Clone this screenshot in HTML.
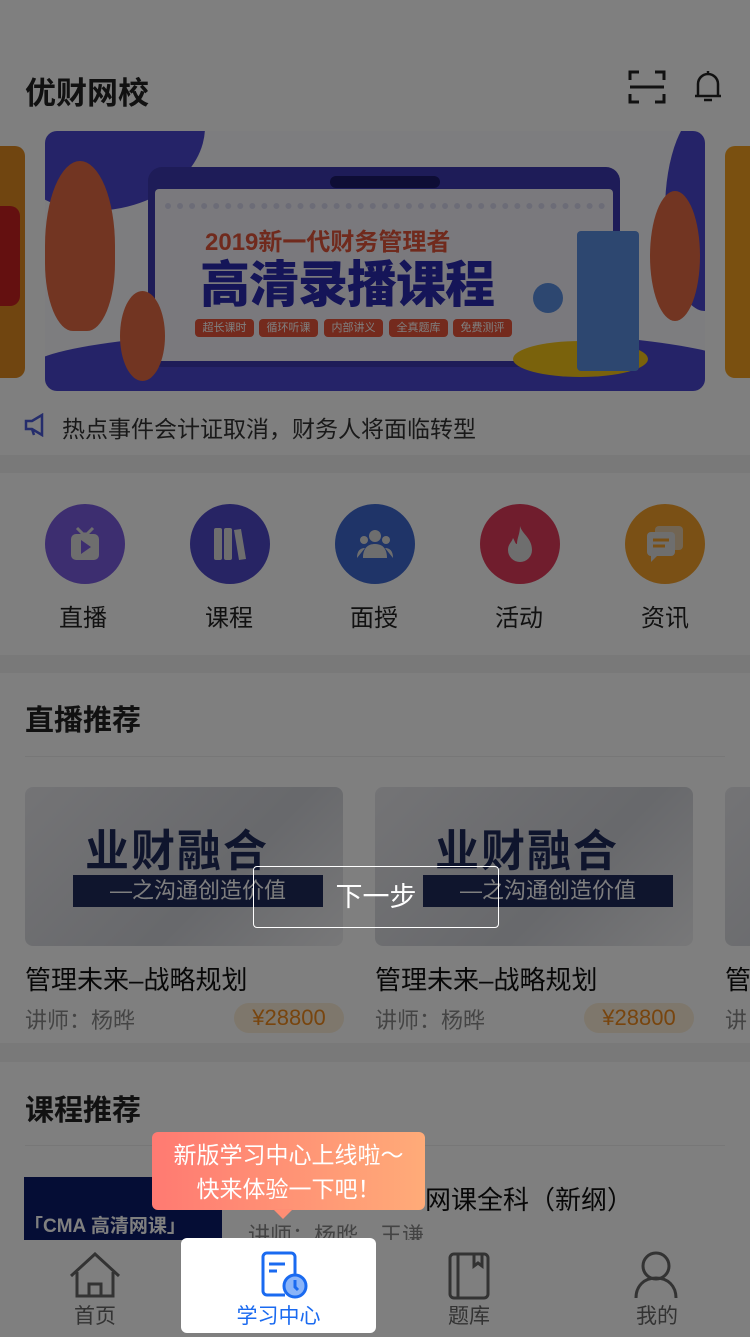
<!DOCTYPE html>
<html><head><meta charset="utf-8"><style>
*{margin:0;padding:0;box-sizing:border-box}
body{width:750px;height:1337px;overflow:hidden;background:#fff;font-family:"Liberation Sans","Noto Sans CJK SC",sans-serif;color:#222;position:relative}
.abs{position:absolute}
.band{position:absolute;left:0;width:750px;background:#f2f2f2}
.ic{position:absolute;top:504px;width:80px;height:80px;border-radius:50%}
.ic svg{position:absolute;left:20px;top:20px}
.lab{position:absolute;top:598px;width:120px;text-align:center;font-size:24px;color:#222}
.card{position:absolute;top:787px;width:318px;height:159px;border-radius:8px;background:linear-gradient(135deg,#e8e8ec,#d0d2d8 60%,#f0f0f2);overflow:hidden}
.card .t1{position:absolute;left:60px;top:28px;font-size:44px;font-weight:bold;color:#1e2a5a;letter-spacing:2px}
.card .t2{position:absolute;left:48px;top:88px;width:250px;height:32px;background:#1e2a5a;color:#fff;font-size:22px;line-height:32px;text-align:center}
.ct{position:absolute;top:960px;font-size:26px;color:#111}
.cl{position:absolute;top:1003px;font-size:22px;color:#888}
.pr{position:absolute;top:1003px;width:110px;height:30px;border-radius:15px;background:#fdeed8;color:#f08a1c;font-size:22px;text-align:center;line-height:30px}
.tab{position:absolute;top:1300px;width:120px;text-align:center;font-size:21px;color:#666}
#ov{position:absolute;left:0;top:0;width:750px;height:1337px;background:rgba(0,0,0,.5)}
.tg{position:absolute;top:188px;width:59px;height:18px;border-radius:4px;background:#e8553a;color:#fff;font-size:11px;line-height:18px;text-align:center}
</style></head><body>
<div class="abs" style="left:25px;top:68px;font-size:31px;font-weight:bold">优财网校</div>
<svg class="abs" style="left:628px;top:70px" width="38" height="34" viewBox="0 0 38 34" fill="none" stroke="#222" stroke-width="3"><path d="M2 10V2h9M27 2h9v8M2 24v8h9M27 32h9v-8M2 17h34"/></svg>
<svg class="abs" style="left:692px;top:68px" width="32" height="36" viewBox="0 0 32 36" fill="none" stroke="#222" stroke-width="2.5"><path d="M16 3v3M6 27V16a10 10 0 0 1 20 0v11M3 28h26M12 32h8"/></svg>
<div class="abs" style="left:0;top:146px;width:25px;height:232px;background:#e08a20;border-radius:0 10px 10px 0"><div class="abs" style="left:0;top:60px;width:20px;height:100px;background:#c82020;border-radius:0 10px 10px 0"></div></div>
<div class="abs" style="left:725px;top:146px;width:25px;height:232px;background:#f5a020;border-radius:10px 0 0 10px"></div>
<div class="abs" style="left:45px;top:131px;width:660px;height:260px;border-radius:12px;background:#fafaff;overflow:hidden">
 <div class="abs" style="left:-30px;top:-60px;width:190px;height:140px;background:#4a46d0;border-radius:0 0 60% 40%"></div>
 <div class="abs" style="left:620px;top:-20px;width:80px;height:200px;background:#4a46d0;border-radius:50% 0 0 50%"></div>
 <div class="abs" style="left:-20px;top:200px;width:720px;height:100px;background:#4a46d0;border-radius:40% 40% 0 0"></div>
 <div class="abs" style="left:103px;top:36px;width:472px;height:200px;background:#3c38b0;border-radius:14px"></div>
 <div class="abs" style="left:110px;top:58px;width:458px;height:172px;background:#f4f3fa;border-radius:4px"></div>
 <div class="abs" style="left:285px;top:45px;width:110px;height:12px;background:#1c1a6a;border-radius:6px"></div>
 <div class="abs" style="left:120px;top:72px;width:440px;height:10px;border-top:6px dotted #d8d8ee"></div>
 <div class="abs" style="left:160px;top:91px;font-size:24px;color:#e0553a;font-weight:bold">2019新一代财务管理者</div>
 <div class="abs" style="left:155px;top:125px;font-size:50px;line-height:58px;color:#2a2ab0;font-weight:900;letter-spacing:-1px">高清录播课程</div>
 <div class="tg" style="left:150px">超长课时</div><div class="tg" style="left:214px">循环听课</div><div class="tg" style="left:279px">内部讲义</div><div class="tg" style="left:344px">全真题库</div><div class="tg" style="left:408px">免费测评</div>
 <div class="abs" style="left:0;top:30px;width:70px;height:170px;background:#e46a44;border-radius:50% 50% 40% 40%"></div>
 <div class="abs" style="left:75px;top:160px;width:45px;height:90px;background:#e46a44;border-radius:50%"></div>
 <div class="abs" style="left:605px;top:60px;width:50px;height:130px;background:#e46a44;border-radius:50%"></div>
 <div class="abs" style="left:468px;top:210px;width:135px;height:36px;background:#f5c518;border-radius:50%"></div>
 <div class="abs" style="left:532px;top:100px;width:62px;height:140px;background:#5a8ee0;border-radius:4px"></div>
 <div class="abs" style="left:488px;top:152px;width:30px;height:30px;background:#5a8ee0;border-radius:50%"></div>
</div>
<svg class="abs" style="left:24px;top:413px" width="26" height="24" viewBox="0 0 26 24" fill="none" stroke="#4a5ad8" stroke-width="2.5"><path d="M2 8h6l10-6v20L8 16H2z M8 16l2 6"/></svg>
<div class="abs" style="left:62px;top:410px;font-size:23px;color:#333">热点事件会计证取消，财务人将面临转型</div>
<div class="band" style="top:455px;height:18px"></div>
<div class="ic" style="left:45px;background:#7b5ce0"><svg width="40" height="40" viewBox="0 0 40 40" fill="#ddd"><path d="M12 4l6 6h4l6-6" stroke="#ddd" stroke-width="3" fill="none"/><rect x="6" y="10" width="28" height="26" rx="5"/><path d="M16 16v14l10-7z" fill="#7b5ce0"/></svg></div>
<div class="ic" style="left:190px;background:#4e48c8"><svg width="40" height="40" viewBox="0 0 40 40" fill="#ddd"><rect x="4" y="4" width="8" height="32" rx="2"/><rect x="14" y="4" width="8" height="32" rx="2"/><path d="M24 6l7-1 5 30-7 1z"/></svg></div>
<div class="ic" style="left:335px;background:#3e68d0"><svg width="40" height="40" viewBox="0 0 40 40" fill="#ddd"><circle cx="20" cy="12" r="6"/><circle cx="9" cy="16" r="4"/><circle cx="31" cy="16" r="4"/><path d="M8 34c0-10 5-14 12-14s12 4 12 14zM2 34c0-7 3-10 8-10M38 34c0-7-3-10-8-10"/></svg></div>
<div class="ic" style="left:480px;background:#e03a5a"><svg width="40" height="40" viewBox="0 0 40 40" fill="#ddd"><path d="M20 2c2 8 12 12 12 24a12 12 0 0 1-24 0c0-6 4-8 5-12 2 3 2 6 4 6 0-6 3-10 3-18z"/></svg></div>
<div class="ic" style="left:625px;background:#f5a02a"><svg width="40" height="40" viewBox="0 0 40 40" fill="#ddd"><rect x="10" y="2" width="28" height="24" rx="4" opacity=".7"/><rect x="2" y="8" width="28" height="24" rx="4"/><path d="M6 32v6l6-6z"/><path d="M8 16h16M8 22h12" stroke="#f5a02a" stroke-width="3"/></svg></div>
<div class="lab" style="left:23px">直播</div><div class="lab" style="left:169px">课程</div><div class="lab" style="left:314px">面授</div><div class="lab" style="left:459px">活动</div><div class="lab" style="left:605px">资讯</div>
<div class="band" style="top:655px;height:18px"></div>
<div class="abs" style="left:25px;top:697px;font-size:29px;font-weight:bold">直播推荐</div>
<div class="abs" style="left:25px;top:756px;width:700px;height:1px;background:#eee"></div>
<div class="card" style="left:25px"><div class="t1">业财融合</div><div class="t2">—之沟通创造价值</div></div>
<div class="card" style="left:375px"><div class="t1">业财融合</div><div class="t2">—之沟通创造价值</div></div>
<div class="card" style="left:725px"></div>
<div class="ct" style="left:25px">管理未来–战略规划</div><div class="ct" style="left:375px">管理未来–战略规划</div><div class="ct" style="left:725px">管</div>
<div class="cl" style="left:25px">讲师：杨晔</div><div class="cl" style="left:375px">讲师：杨晔</div><div class="cl" style="left:725px">讲</div>
<div class="pr" style="left:234px">¥28800</div><div class="pr" style="left:584px">¥28800</div>
<div class="band" style="top:1043px;height:19px"></div>
<div class="abs" style="left:25px;top:1087px;font-size:29px;font-weight:bold">课程推荐</div>
<div class="abs" style="left:25px;top:1145px;width:700px;height:1px;background:#eee"></div>
<div class="abs" style="left:24px;top:1177px;width:198px;height:63px;background:#0a1a6a;overflow:hidden"><div class="abs" style="left:0;top:34px;font-size:19px;color:#fff;font-weight:bold;white-space:nowrap">「CMA 高清网课」</div></div>
<div class="abs" style="left:425px;top:1180px;font-size:26px;color:#111">网课全科（新纲）</div>
<div class="abs" style="left:248px;top:1218px;font-size:22px;color:#888">讲师：杨晔　王谦</div>
<div class="abs" style="left:0;top:1240px;width:750px;height:97px;background:#fff"></div>
<svg class="abs" style="left:67px;top:1252px" width="56" height="48" viewBox="0 0 56 48" fill="none" stroke="#666" stroke-width="3"><path d="M4 24L28 2l24 22M10 20v24h36V20M22 44V32h12v12"/></svg>
<svg class="abs" style="left:448px;top:1252px" width="42" height="48" viewBox="0 0 42 48" fill="none" stroke="#666" stroke-width="3"><rect x="2" y="2" width="38" height="44" rx="4"/><path d="M10 2v44M26 2v12l4-3 4 3V2"/></svg>
<svg class="abs" style="left:634px;top:1250px" width="46" height="50" viewBox="0 0 46 50" fill="none" stroke="#666" stroke-width="3"><circle cx="22" cy="16" r="13"/><path d="M2 48c0-12 8-20 20-20s20 8 20 20"/></svg>
<div class="tab" style="left:35px">首页</div><div class="tab" style="left:409px">题库</div><div class="tab" style="left:597px">我的</div>
<div id="ov"></div>
<div class="abs" style="left:181px;top:1238px;width:195px;height:95px;background:#fff;border-radius:6px"></div>
<svg class="abs" style="left:259px;top:1251px" width="50" height="50" viewBox="0 0 50 50" fill="none" stroke="#1a6af0" stroke-width="3"><path d="M26 44H8a4 4 0 0 1-4-4V6a4 4 0 0 1 4-4h24a4 4 0 0 1 4 4v18"/><path d="M10 13h16M10 20h8"/><circle cx="36" cy="35" r="11" fill="#8ab4f8"/><path d="M36 29v7l3 3"/></svg>
<div class="abs" style="left:181px;top:1300px;width:195px;text-align:center;font-size:21px;color:#1a6af0">学习中心</div>
<div class="abs" style="left:152px;top:1132px;width:273px;height:78px;border-radius:6px;background:linear-gradient(90deg,#ff7a72,#ffab78);color:#fff;font-size:23px;text-align:center;line-height:34px;padding-top:6px">新版学习中心上线啦～<br>快来体验一下吧！</div>
<div class="abs" style="left:273px;top:1209px;width:0;height:0;border-left:10px solid transparent;border-right:10px solid transparent;border-top:10px solid #ff8e74"></div>
<div class="abs" style="left:253px;top:866px;width:246px;height:62px;border:1px solid #fff;border-radius:4px;color:#fff;font-size:27px;text-align:center;line-height:60px">下一步</div>
</body></html>
